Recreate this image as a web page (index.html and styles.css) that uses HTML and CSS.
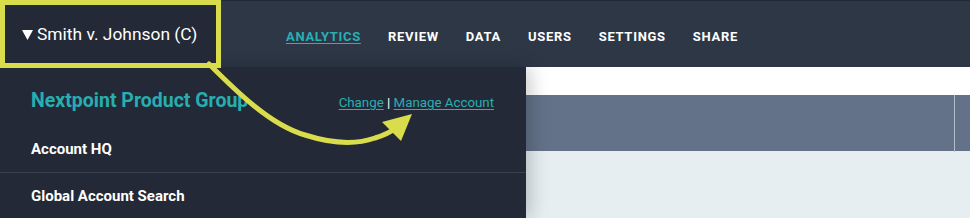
FILE: index.html
```html
<!DOCTYPE html>
<html>
<head>
<meta charset="utf-8">
<link rel="stylesheet" href="styles.css">
</head>
<body>
<div class="page">
  <header class="topbar">
    <div class="case-trigger">
      <svg class="caret" width="11" height="10" viewBox="0 0 11 10"><polygon points="0,0 11,0 5.5,10" fill="#ffffff"/></svg>
      <span class="case-name">Smith v. Johnson (C)</span>
    </div>
    <nav class="nav">
      <a class="nav-item active">ANALYTICS</a>
      <a class="nav-item">REVIEW</a>
      <a class="nav-item">DATA</a>
      <a class="nav-item">USERS</a>
      <a class="nav-item">SETTINGS</a>
      <a class="nav-item">SHARE</a>
    </nav>
  </header>
  <div class="main">
    <aside class="dropdown">
      <div class="dd-head">
        <span class="account-name">Nextpoint Product Group</span>
        <span class="account-links"><a class="link">Change</a> | <a class="link">Manage Account</a></span>
      </div>
      <div class="dd-item first">Account HQ</div>
      <div class="dd-item">Global Account Search</div>
    </aside>
    <section class="content">
      <div class="band-white"></div>
      <div class="band-slate"><div class="band-divider"></div></div>
      <div class="band-light"></div>
    </section>
  </div>
  <svg class="annotation" width="970" height="218" viewBox="0 0 970 218">
    <path d="M209 64 C 235 90, 270 125, 305 135 C 330 143, 355 145, 375 138 C 385 135, 392 131, 396 128" fill="none" stroke="#d9dc4b" stroke-width="5" stroke-linecap="round"/>
    <polygon points="412,114 382,122 401,141" fill="#d9dc4b"/>
  </svg>
</div>
</body>
</html>
```
FILE: styles.css
```css
* { box-sizing: border-box; }
html, body { margin: 0; padding: 0; }
body {
  width: 970px;
  height: 218px;
  overflow: hidden;
  font-family: Roboto, "Liberation Sans", sans-serif;
  background: #e6eef1;
}
.page { position: relative; width: 970px; height: 218px; }
.topbar {
  height: 67px;
  background: #2d3746;
  border-top: 1px solid #232a36;
  display: flex;
  align-items: center;
}
.case-trigger {
  align-self: flex-start;
  margin-top: -1px;
  width: 221px;
  height: 68px;
  background: #232936;
  border: 5px solid #d9dc4b;
  display: flex;
  align-items: center;
  padding-left: 17px;
  gap: 4px;
  position: relative;
  z-index: 2;
}
.caret { margin-top: 1px; }
.case-name {
  color: #ffffff;
  font-size: 17.4px;
  font-weight: 400;
  letter-spacing: 0;
}
.nav {
  display: flex;
  gap: 27px;
  margin-left: 65px;
  padding-top: 4px;
}
.nav-item {
  color: #ffffff;
  font-weight: 700;
  font-size: 13px;
  letter-spacing: 0.7px;
}
.nav-item.active {
  color: #2aafb2;
  text-decoration: underline;
  text-underline-offset: 2px;
}
.main { display: flex; height: 151px; }
.dropdown {
  width: 526px;
  flex: none;
  background: #232936;
  position: relative;
  z-index: 1;
  box-shadow: 4px 0 18px rgba(0,0,0,0.22);
}
.dd-head {
  display: flex;
  justify-content: space-between;
  align-items: baseline;
  padding: 22px 32px 0 31px;
}
.account-name {
  color: #27aeb1;
  font-weight: 700;
  font-size: 19.5px;
}
.account-links {
  color: #ffffff;
  font-size: 13.3px;
}
.link {
  color: #2aafb2;
  text-decoration: underline;
  text-underline-offset: 2px;
}
.dd-item {
  color: #ffffff;
  font-weight: 700;
  font-size: 15px;
  padding-left: 31px;
  height: 46px;
  display: flex;
  align-items: center;
}
.dd-item.first {
  margin-top: 14px;
  border-bottom: 1px solid #3a4250;
  height: 47px;
}
.content { flex: 1; display: flex; flex-direction: column; }
.band-white { height: 28px; background: #ffffff; }
.band-slate { height: 56px; background: #637289; position: relative; }
.band-divider {
  position: absolute;
  left: 428px;
  top: 0;
  width: 1px;
  height: 57px;
  background: #b3bcc8;
}
.band-light { flex: 1; background: #e6eef1; }
.annotation { position: absolute; left: 0; top: 0; z-index: 5; pointer-events: none; }
```
